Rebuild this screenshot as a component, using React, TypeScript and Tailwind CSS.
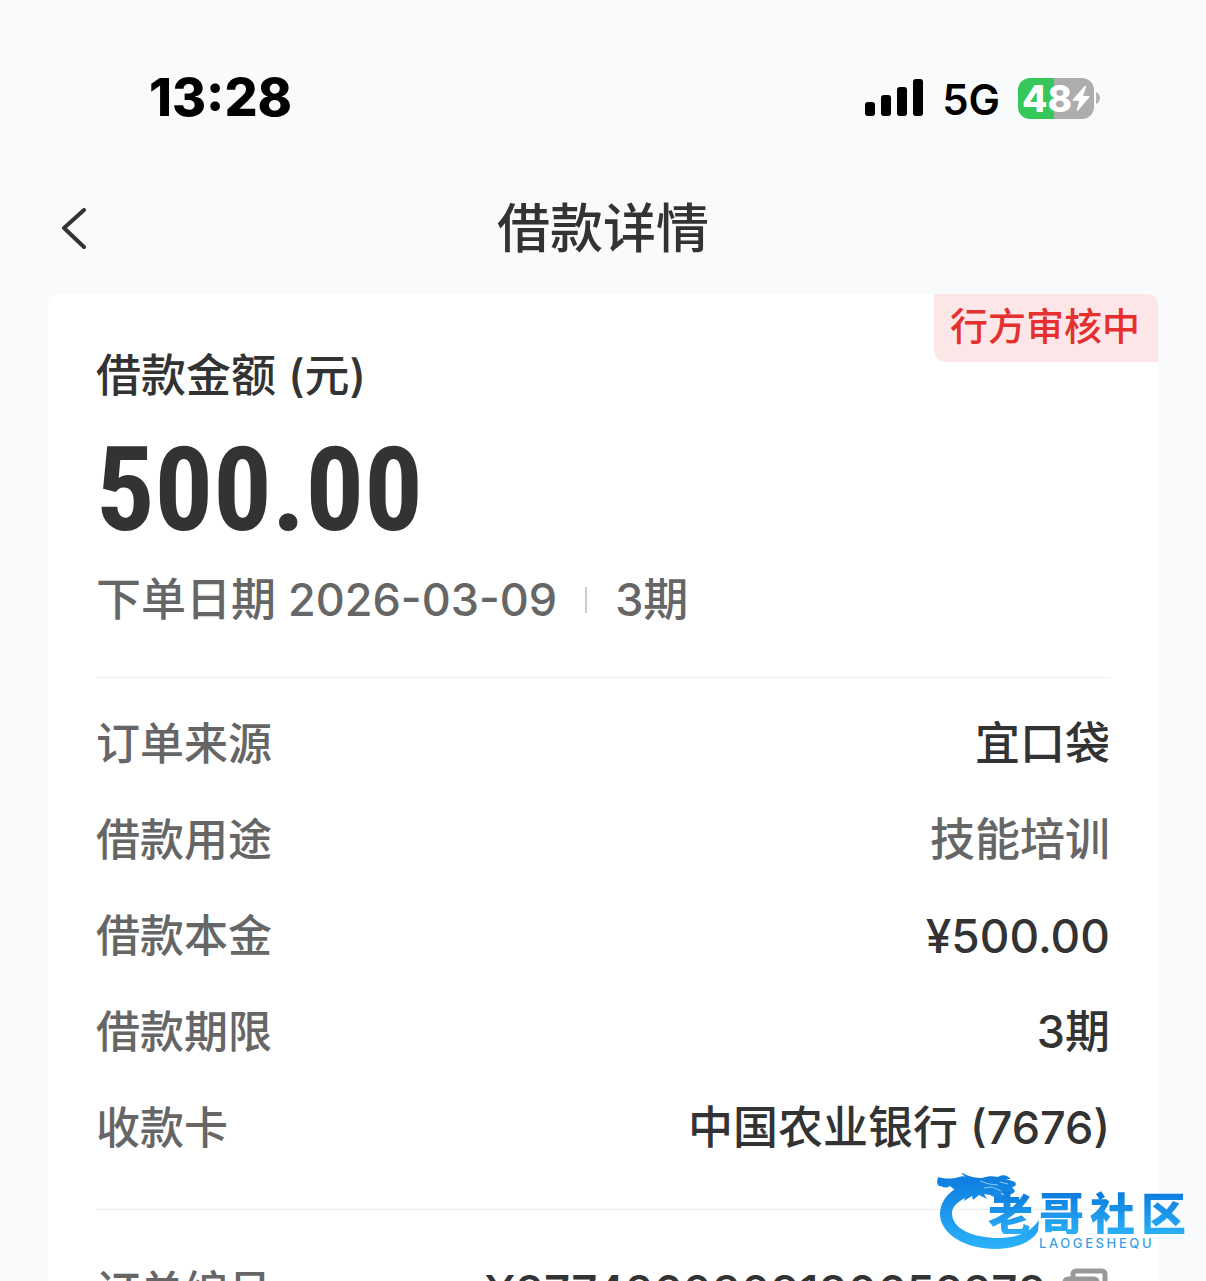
type Row = { label: string; value: string; tone?: "muted" | "strong"; latin?: boolean };

const rows: Row[] = [
  { label: "订单来源", value: "宜口袋" },
  { label: "借款用途", value: "技能培训", tone: "muted" },
  { label: "借款本金", value: "¥500.00", latin: true },
  { label: "借款期限", value: "3期" },
  { label: "收款卡", value: "中国农业银行 (7676)" },
];

function StatusBar() {
  return (
    <div className="flex h-[164px] items-center justify-between pt-8 pr-[106px] pl-[149px] text-black">
      <time className="text-[52px] leading-none font-extrabold">13:28</time>
      <div className="flex items-center">
        <svg className="h-[38px] w-[60px]" viewBox="0 0 60 38" role="img" aria-label="信号">
          <rect x="1" y="23" width="10" height="14" rx="3" />
          <rect x="17" y="16" width="10" height="21" rx="3" />
          <rect x="33" y="8" width="10" height="29" rx="3" />
          <rect x="49" y="0" width="10" height="37" rx="3" />
        </svg>
        <span className="ml-[18px] pt-1 text-[42px] leading-none font-semibold">5G</span>
        <div className="ml-[18px] flex items-center">
          <div className="flex h-[41px] w-[76px] items-center justify-center rounded-xl bg-linear-to-r from-[#35c759] from-48% to-[#adadaf] to-48% text-white">
            <span className="text-[37px] leading-none font-extrabold">48</span>
            <svg className="h-[27px] w-[18px]" viewBox="0 0 18 27" fill="currentColor" aria-hidden="true">
              <path d="M12.500 1.200 1 14.200c-.7.8-.3 1.500.6 1.500h5.600L4.800 24.800c-.3 1.100.6 1.500 1.300.7L17.200 12.500c.7-.8.3-1.500-.6-1.500H11l3-8.800c.3-1.200-.8-1.800-1.500-1z" />
            </svg>
          </div>
          <svg className="ml-0.5 h-3.5 w-1" viewBox="0 0 4 14" fill="#b4b4b6" aria-hidden="true">
            <path d="M0 1c2.500 1 4 3.300 4 6s-1.500 5-4 6z" />
          </svg>
        </div>
      </div>
    </div>
  );
}

function Watermark() {
  return (
    <div className="absolute right-5 bottom-7 h-20 w-[250px]">
      <svg className="absolute inset-0 h-full w-full" viewBox="0 0 250 80" aria-hidden="true">
        <defs>
          <linearGradient id="dragon" gradientUnits="userSpaceOnUse" x1="0" y1="0" x2="0" y2="78">
            <stop offset="0.1" stopColor="#0f7fe0" />
            <stop offset="1" stopColor="#2bb4fb" />
          </linearGradient>
        </defs>
        <g fill="url(#dragon)">
          <path d="M36 9C15 14 4 27 4 42c1 20 27 34 55 34 22 0 38-8 43-18l1-11c-8 12-22 18-40 18-26 0-47-9-47-25 0-8 9-15 26-20z" />
          <path d="M2 4c8 2 14 2 21 0 3-1 5-1 7 0-2-1-4-3-5-5 6 4 13 6 21 6 6-2 11-2 16-1 3-2 6-2 9-1l4 3-5 0 9 3c2 3 0 5-3 5l3 4c-2 4-6 4-10 3l-5-1 5 3c-2 2-4 4-7 3l-8-4-6-1 3 5-8-4-6 5-1-4-8 5 1-4-8 3 1-5 5-4c-6 0-10-2-13-5-3 2-6 2-9 0-2 1-3 0-4-4z" />
        </g>
        <path d="M44 8l9 3 9 1M48 15l8-1 9 4M64 9l8 2" stroke="#8acbfb" strokeWidth="1" fill="none" />
      </svg>
      <div className="absolute top-[17px] right-0 flex gap-1.5 font-['Noto_Sans_CJK_SC',sans-serif] text-[45px] leading-[44px] font-black">
        {["老", "哥", "社", "区"].map((c) => (
          <span key={c} className="bg-linear-to-b from-[#0b78dc] to-[#2bb0f8] bg-clip-text text-transparent">
            {c}
          </span>
        ))}
      </div>
      <span className="absolute top-[62px] left-[103px] text-[13px] leading-4 font-medium tracking-[0.2em] text-[#3b9fe8]">
        LAOGESHEQU
      </span>
    </div>
  );
}

export default function App() {
  return (
    <div className="relative h-screen overflow-hidden bg-[#f9fafc] font-['Inter','Noto_Sans_CJK_SC',sans-serif] text-[45px] font-medium text-[#333333]">
      <StatusBar />
      <header className="relative flex h-[130px] items-center justify-center">
        <button type="button" aria-label="返回" className="absolute left-[60px] p-0">
          <svg className="h-[42px] w-7" viewBox="0 0 28 42" fill="none" stroke="#333333" strokeWidth="4" strokeLinecap="round" strokeLinejoin="round">
            <path d="M24 2 4 20l20 19" />
          </svg>
        </button>
        <h1 className="text-[53px] leading-none font-medium">借款详情</h1>
      </header>

      <main className="relative mx-12 rounded-[10px] bg-white px-12 pt-[50px] pb-12">
        <div className="absolute top-0 right-0 flex h-[68px] items-center rounded-tr-[10px] rounded-bl-[12px] bg-[#fde6e7] pr-[18px] pb-1 pl-4 text-[38px] leading-none font-medium text-[#e5302f]">
          行方审核中
        </div>
        <h2 className="leading-[64px] font-medium">借款金额 (元)</h2>
        <p className="mt-6 font-['Roboto_Condensed','Roboto',sans-serif] text-[116px] leading-[116px] font-bold">500.00</p>
        <p className="mt-5 flex items-center leading-[64px] text-[#666666]">
          <span>下单日期 2026-03-09</span>
          <span className="mx-7 h-[26px] w-0.5 bg-[#cccccc]" />
          <span>3期</span>
        </p>
        <hr className="mt-[45px] border-t border-[#eeeeee]" />
        <dl className="mt-[34px] flex flex-col gap-8">
          {rows.map((r) => (
            <div key={r.label} className="flex items-center justify-between leading-[64px]">
              <dt className="text-[44px] text-[#666666]">{r.label}</dt>
              <dd className={r.tone === "muted" ? "text-[#666666]" : r.latin ? "text-[46px]" : ""}>{r.value}</dd>
            </div>
          ))}
        </dl>
        <hr className="mt-[49px] border-t border-[#eeeeee]" />
        <dl className="mt-[50px] flex items-center justify-between leading-[64px]">
          <dt className="text-[44px] text-[#666666]">订单编号</dt>
          <dd className="flex items-center gap-4 text-[46px]">
            X8774260309180652272
            <button type="button" aria-label="复制">
              <svg className="h-12 w-12" viewBox="0 0 48 48" fill="none" stroke="#999999" strokeWidth="5" strokeLinejoin="round">
                <rect x="11" y="3" width="32" height="28" rx="3" />
                <rect x="3" y="11" width="32" height="28" rx="3" fill="#ffffff" />
              </svg>
            </button>
          </dd>
        </dl>
      </main>
      <Watermark />
    </div>
  );
}
